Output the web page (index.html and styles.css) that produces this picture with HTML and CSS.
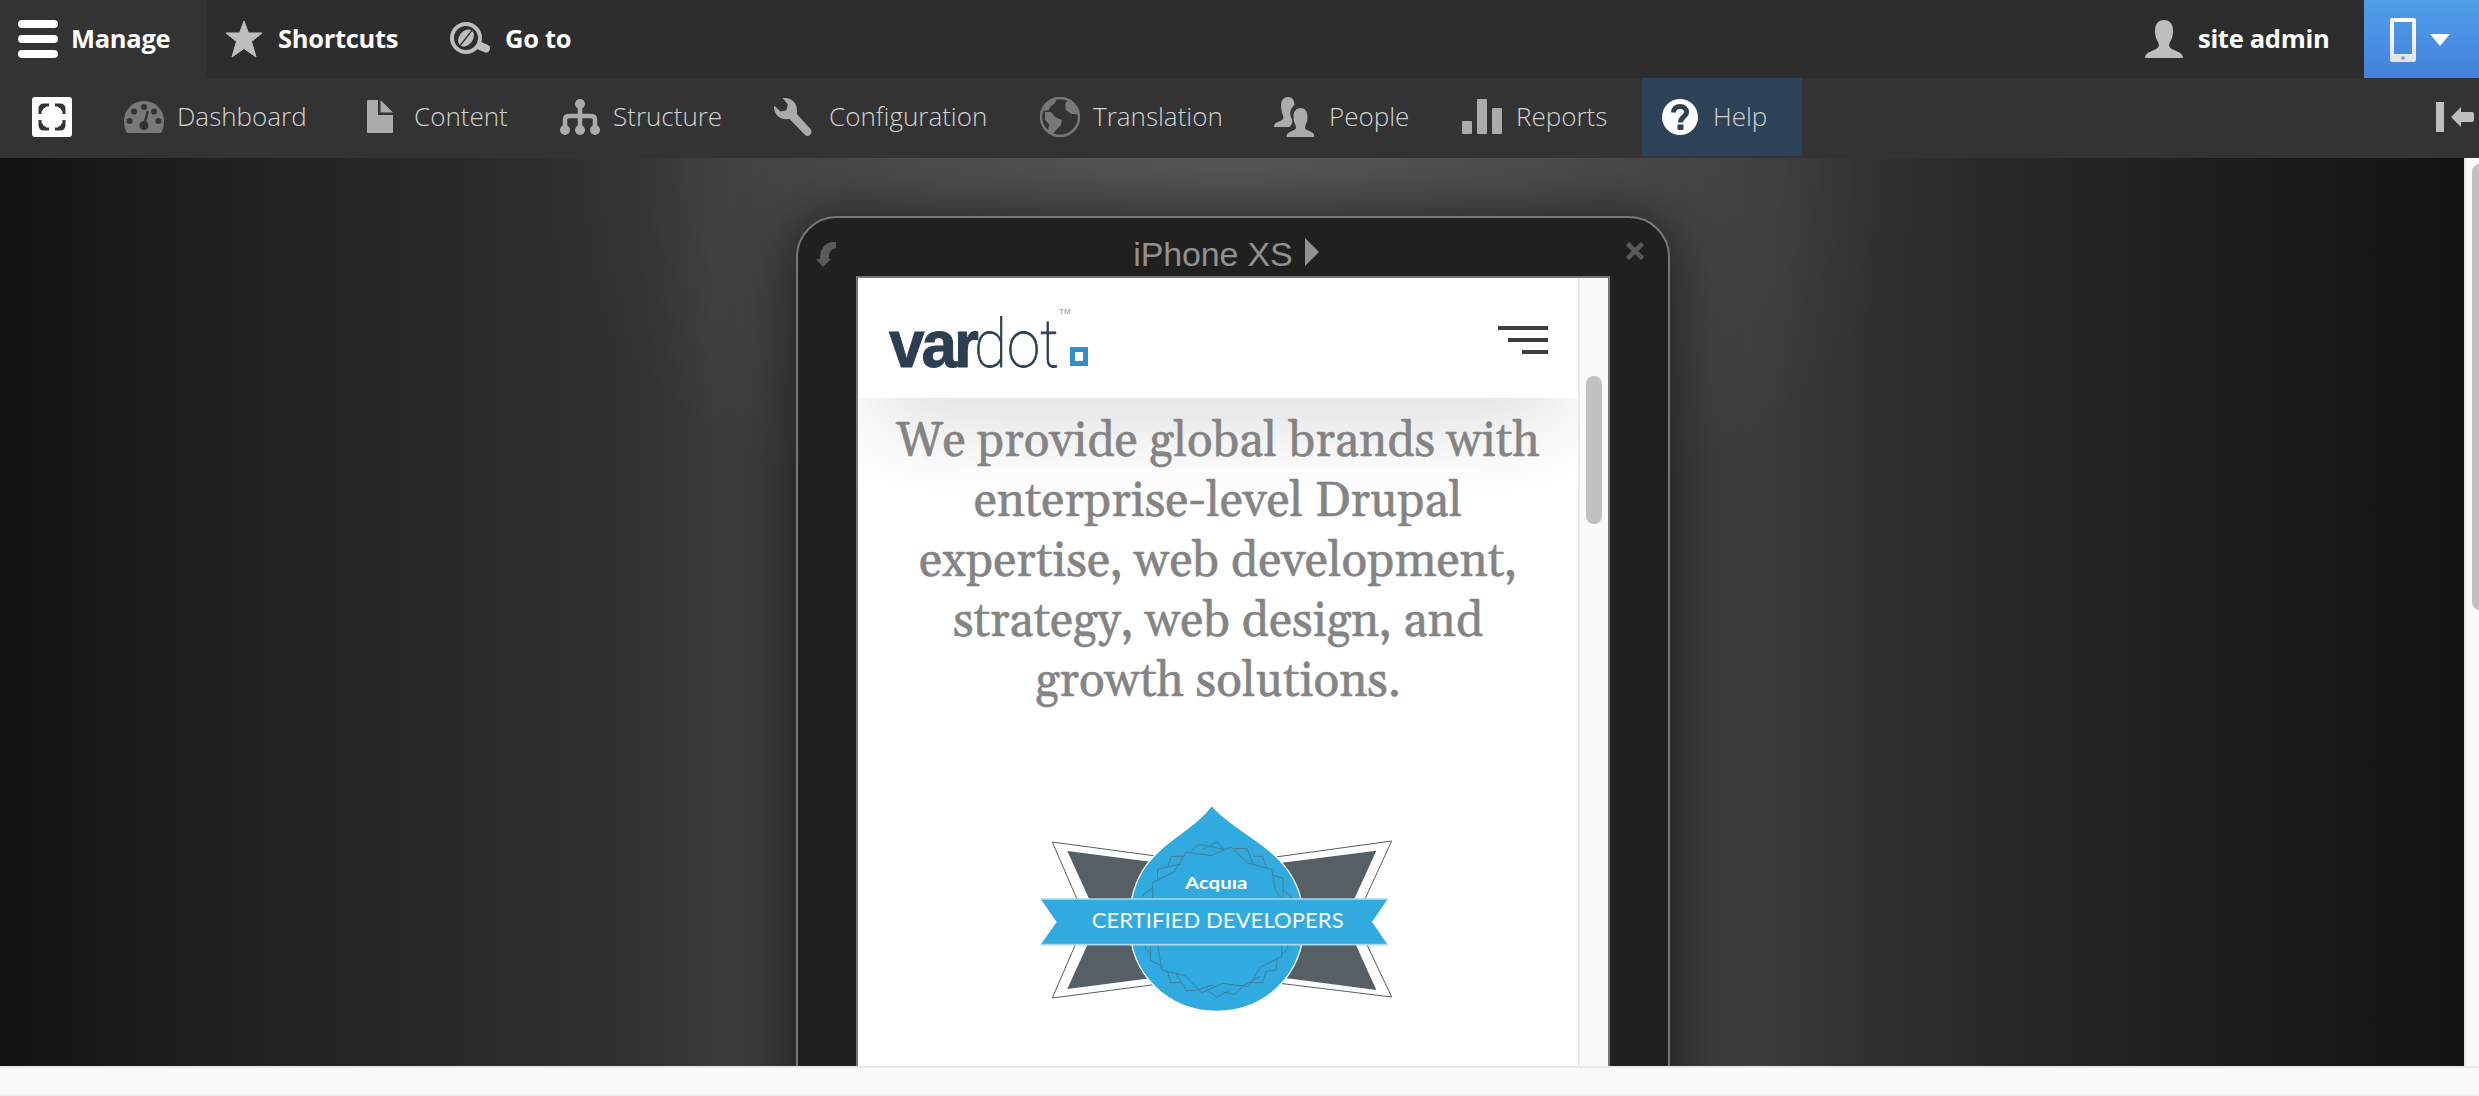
FILE: index.html
```
<!DOCTYPE html>
<html lang="en">
<head>
<meta charset="utf-8">
<title>Device preview</title>
<link rel="stylesheet" href="styles.css">
</head>
<body>
<header class="bar">
  <a class="tab tab-manage"><svg width="40" height="38" viewBox="0 0 40 38"><g fill="#fff"><rect width="40" height="8" rx="4"/><rect y="15" width="40" height="8" rx="4"/><rect y="30" width="40" height="8" rx="4"/></g></svg><span>Manage</span></a>
  <a class="tab tab-shortcuts"><svg width="38" height="38" viewBox="0 0 38 38"><path fill="#bebebe" stroke="#bebebe" stroke-linejoin="round" d="M19 1l4.400 12H37L26.500 21.500l4.500 15.500L19 28.500 7 37l4.500-15.500L1 13h13.600z"/></svg><span>Shortcuts</span></a>
  <a class="tab tab-goto"><svg width="40" height="34" viewBox="0 0 40 34"><circle cx="16" cy="16" r="14" fill="none" stroke="#bebebe" stroke-width="4"/><path d="M30 24l6 2.500" stroke="#bebebe" stroke-width="8" stroke-linecap="round"/><g transform="rotate(38 16 16)"><ellipse cx="16" cy="16" rx="6.800" ry="9.500" fill="#bebebe"/><path d="M16 6v20" stroke="#2d2d2d" stroke-width="1.500"/></g></svg><span>Go to</span></a>
  <a class="tab tab-user"><svg width="38" height="38" viewBox="0 0 38 38"><path fill="#bebebe" d="M0 38c0-5 6-6.500 11-9 3-1.500 3.500-4 2-7-2-3-3-7-3-11C10 4 13 0 19 0s9 4 9 11c0 4-1 8-3 11-1.500 3-1 5.500 2 7 5 2.500 11 4 11 9z"/></svg><span>site admin</span></a>
  <a class="devices"><svg width="60" height="44" viewBox="0 0 60 44"><defs><linearGradient id="phone" x2="0" y2="1"><stop stop-color="#fff"/><stop offset="1" stop-color="#e3e3e6"/></linearGradient></defs><path fill="url(#phone)" fill-rule="evenodd" d="M2 0h22q2 0 2 2v40q0 2-2 2H2q-2 0-2-2V2q0-2 2-2zM4 4v32h18V4z"/><ellipse cx="13" cy="40" rx="1.800" ry="2" fill="#6fa0e0"/><path fill="#fff" d="M40 16h20L50 28z"/></svg></a>
</header>
<nav class="tray">
  <a class="item i-home"><svg width="40" height="40" viewBox="0 0 40 40"><rect width="40" height="40" rx="3" fill="#fff"/><path fill="none" stroke="#333" stroke-width="3" d="M8 17v-5q0-4 4-4h5M23 8h5q4 0 4 4v5M32 23v5q0 4-4 4h-5M17 32h-5q-4 0-4-4v-5"/><path fill="#333" d="M8 8h7l-2 3h-1l-1 1v1l-3 2zM32 8v7l-3-2v-1l-1-1h-1l-2-3zM32 32h-7l2-3h1l1-1v-1l3-2zM8 32v-7l3 2v1l1 1h1l2 3z"/></svg></a>
  <a class="item i-dash"><svg width="40" height="32" viewBox="0 0 40 32"><path fill="#787878" d="M3 32q-3-5-3-12a20 20 0 0 1 40 0q0 7-3 12z"/><g fill="#333"><circle cx="20" cy="6" r="3"/><circle cx="10" cy="10.500" r="3"/><circle cx="30" cy="10.500" r="3"/><circle cx="5.500" cy="20" r="3"/><circle cx="34.500" cy="20" r="3"/><circle cx="20" cy="24.500" r="4.500"/></g><path stroke="#333" stroke-width="2.500" stroke-linecap="round" d="M20.500 23l3-12"/></svg><span>Dashboard</span></a>
  <a class="item i-content"><svg width="26" height="33" viewBox="0 0 26 33"><path fill="#ababab" d="M1 0h10v15h15v17q0 1-1 1H1q-1 0-1-1V1q0-1 1-1zM13.500 0L26 12.500H13.500z"/></svg><span>Content</span></a>
  <a class="item i-structure"><svg width="40" height="36" viewBox="0 0 40 36"><path fill="none" stroke="#ababab" stroke-width="4.500" d="M20 5v25M5 29v-8q0-4 4-4h22q4 0 4 4v8"/><g fill="#ababab"><circle cx="20" cy="5" r="5"/><circle cx="5" cy="31" r="5"/><circle cx="20" cy="31" r="5"/><circle cx="35" cy="31" r="5"/></g></svg><span>Structure</span></a>
  <a class="item i-config"><svg width="38" height="38" viewBox="0 0 38 38"><path fill="#ababab" d="M8.500 0C17-1 23.500 5 23 13c0 2-.5 2.500.5 3.800L36.500 31c3 3.500-1 8.500-5 6.500L16 21.500c-1-.8-2-.5-4-.3C5 21.500-.5 15.500 0 7.500l6.500 6 6-1.300 1.300-6z"/></svg><span>Configuration</span></a>
  <a class="item i-translate"><svg width="40" height="40" viewBox="0 0 40 40"><circle cx="20" cy="20" r="19" fill="none" stroke="#787878" stroke-width="2.500"/><path fill="#787878" d="M7 6L17 1l-2 5-5 4-1 3-6 1zM28 3l-3 4 1 6 5 4h4l3 1C37 11 33 6 28 3zM5 15h6l4 5 7 3-1 5-5 5-4 5-4-3 1-8-4-4z"/></svg><span>Translation</span></a>
  <a class="item i-people"><svg width="40" height="40" viewBox="0 0 40 40"><path fill="#ababab" d="M0 30c0-5 5-5 8-7 2-1 1.500-4 .5-6C7.500 14 7 12 7 8.500 7 3.500 9.500 0 14 0s6.500 3.500 6.500 8C16 12 15 17 18 22q1.500 4-2.500 8z"/><path fill="#ababab" d="M12.500 40c0-5 5-5.500 8.500-7.500 1.500-1 1-3.500 0-5.500s-1.500-4-1.500-7.500c0-5 2.500-8.500 7-8.500s7 3.500 7 8.500c0 3.500-.5 5.500-1.500 7.500s-1.500 4.500 0 5.500c3.500 2 8.500 2.500 8.500 7.500z"/></svg><span>People</span></a>
  <a class="item i-reports"><svg width="40" height="35" viewBox="0 0 40 35"><g fill="#ababab"><rect y="22" width="10" height="13" rx="1"/><rect x="15" width="10" height="35" rx="1"/><rect x="30" y="9" width="10" height="26" rx="1"/></g></svg><span>Reports</span></a>
  <a class="item i-help"><svg width="36" height="36" viewBox="0 0 36 36"><circle cx="18" cy="18" r="18" fill="#fff"/><path fill="none" stroke="#2d4257" stroke-width="5" d="M11.500 13.500c0-4 3-6 6.500-6s6.500 2 6.500 5.500c0 5-6 4.500-6 10.500"/><rect x="15.500" y="25.500" width="6" height="5.500" rx="1" fill="#2d4257"/></svg><span>Help</span></a>
  <a class="item i-orient"><svg width="38" height="30" viewBox="0 0 38 30"><path fill="#bebebe" d="M0 0h8v30H0zM15 15L25 5v5h11q2 0 2 2v6q0 2-2 2H25v5z"/></svg></a>
</nav>
<main class="workspace">
  <section class="stage">
    <div class="device">
      <div class="device-head">
        <svg class="rotate" width="22" height="25" viewBox="0 0 22 25"><path fill="#5a5a5a" d="M20 0v6q-8 2-7 11h2l-8 8-7-8h4Q4 2 16 0z"/></svg>
        <span class="device-name">iPhone XS<i class="play"></i></span>
        <svg class="close" width="18" height="18" viewBox="0 0 18 18"><path stroke="#5a5a5a" stroke-width="4.500" d="M1.500 1.500l15 15m0-15l-15 15"/></svg>
      </div>
      <div class="screen">
        <div class="page">
          <div class="site-head">
            <svg width="210" height="80" viewBox="0 0 210 80">
              <text class="logo-bold" x="1" y="65" textLength="87" lengthAdjust="spacingAndGlyphs">var</text>
              <text class="logo-thin" x="86" y="65" textLength="85" lengthAdjust="spacingAndGlyphs">dot</text>
              <text class="logo-tm" x="171" y="12">TM</text>
              <rect x="184.500" y="47.500" width="13" height="14" fill="none" stroke="#318fcd" stroke-width="5"/>
            </svg>
            <div class="menu"><i></i><i></i><i></i></div>
          </div>
          <div class="site-body">
            <p class="lead">We provide global brands with<br>enterprise-level Drupal<br>expertise, web development,<br>strategy, web design, and<br>growth solutions.</p>
            <svg class="badge" width="400" height="240" viewBox="0 0 1200 720">
              <g fill="#fff" stroke="#565e66" stroke-width="3"><path d="M97 156L600 224V558L97 624L198 390z"/><path d="M1115 153L600 224V558L1115 621L1006 390z"/></g>
              <path fill="#565e66" d="M142 183L600 242V538L142 597L236 390zM1069 182L600 242V538L1069 600L974 390z"/>
              <path fill="#31aadf" stroke="#fff" stroke-width="4" d="M575 46C660 148 848 180 852 397C852 560 730 664 590 664C450 664 328 560 328 397C330 170 500 152 575 46z"/>
              <g fill="none" stroke="#477f9b" stroke-width="3"><path d="M398 330V278L462 246L498 187L573 197L632 171L683 219L755 238L766 300L784 326M370 320V314L398 293M413 268V238L482 222M443 232L454 199H490M510 187L536 163L612 178L591 156L548 178M640 176L681 175L700 222M700 199H728L740 234M755 255L789 265V325M789 300L812 317V326"/><path d="M413 464L425 540L495 557L546 608L608 580L685 590L721 532L785 500V464M391 464V511L425 528M376 464V478L391 489M443 545L452 578H482M468 552L500 603L532 600L580 585M560 600L591 622L628 602M608 605L645 613L668 588L720 560M691 578H728L738 545M735 545L768 540L772 505M785 492L803 478V464"/></g>
              <path fill="#31aadf" d="M62 327H1103L1056 396L1103 464H62L110 396z"/>
              <path stroke="#a9dcf3" stroke-width="5" d="M62 327H1103M62 464H1103"/>
              <text class="badge-brand" x="495" y="297" textLength="187" lengthAdjust="spacingAndGlyphs">Acquıa</text>
              <text class="badge-text" x="215" y="415" textLength="756">CERTIFIED DEVELOPERS</text>
            </svg>
          </div>
        </div>
        <div class="track"><i class="thumb"></i></div>
      </div>
    </div>
  </section>
  <div class="page-track"><i class="page-thumb"></i></div>
</main>
<footer class="bottom-track"></footer>
</body>
</html>
```
FILE: styles.css
```
* { box-sizing: border-box; }
body { margin: 0; width: 2479px; height: 1096px; overflow: hidden; background: #fafafa; font-family: "Open Sans", sans-serif; font-size: 26px; }
svg { display: block; flex: none; }

.bar { display: flex; height: 78px; background: #2d2d2d; color: #fff; font-weight: 700; font-size: 25.5px; letter-spacing: -.3px; }
.bar span, .tray span { padding: 0 0 2px 1px; }
.tab { display: flex; align-items: center; padding-bottom: 1px; white-space: nowrap; }
.tab-manage { width: 206px; padding-left: 18px; gap: 12px; background: #333; }
.tab-shortcuts { width: 242px; padding-left: 19px; gap: 14px; }
.tab-goto { padding-left: 2px; gap: 14px; }
.tab-user { margin-left: auto; width: 219px; gap: 14px; }
.devices { width: 115px; padding: 18px 0 0 26px; background: linear-gradient(#4f9fea, #4481dc); }

.tray { display: flex; height: 80px; background: #333; color: #d2d2d2; font-weight: 320; }
.item { display: flex; align-items: center; height: 78px; padding-bottom: 1px; white-space: nowrap; }
.i-home { width: 124px; padding-left: 32px; }
.i-dash { width: 243px; gap: 12px; }
.i-content { width: 193px; gap: 20px; }
.i-structure { width: 214px; gap: 12px; }
.i-config { width: 266px; gap: 16px; }
.i-translate { width: 234px; gap: 12px; }
.i-people { width: 188px; gap: 14px; }
.i-reports { width: 180px; gap: 13px; }
.i-help { width: 160px; padding-left: 20px; gap: 14px; background: #2d4257; }
.i-orient { margin-left: auto; width: 43px; }

.workspace { display: flex; height: 908px; }
.stage {
  width: 2464px; padding-top: 58px; overflow: hidden;
  background:
    radial-gradient(ellipse 700px 420px at 50% 0, rgba(255,255,255,.11), rgba(255,255,255,0)),
    linear-gradient(90deg, #121212, #1f1f1f 8%, #2a2a2a 19%, #323232 26%, #3b3b3b 29%, #424242 38%, #424242 62%, #3b3b3b 72%, #303030 76%, #262626 83%, #1b1b1b 92%, #131313);
}
.device { width: 874px; height: 1200px; margin-left: 796px; padding: 0 58px; border: 2px solid #777; border-radius: 41px; background: #202020; box-shadow: 0 0 60px rgba(0,0,0,.6); }
.device-head { display: flex; justify-content: space-between; align-items: flex-start; height: 58px; margin: 0 -34px 0 -40px; padding-top: 24px; color: #919191; }
.device-name { margin: -6px 12px 0 0; font: 34px/36px "Liberation Sans", Arial, sans-serif; letter-spacing: -.15px; display: flex; align-items: center; gap: 12px; }
.play { border: 14px solid transparent; border-left-color: #919191; border-right: 0; margin-top: -4px; }
.screen { display: flex; width: 754px; height: 1100px; border: 2px solid #777; background: #fff; }
.page { width: 720px; }
.site-head { position: relative; display: flex; justify-content: space-between; height: 120px; padding: 24px 30px 0 30px; background: #fff; box-shadow: 0 30px 100px -20px rgba(0,0,0,.2); clip-path: inset(0 0 -200px 0); }
.logo-bold { font: 700 66px "Liberation Sans", Arial, sans-serif; fill: #2b3f53; stroke: #2b3f53; stroke-width: 1px; letter-spacing: -3px; }
.logo-thin { font: 100 67px Roboto, sans-serif; fill: #2b3f53; stroke: #2b3f53; stroke-width: .8px; }
.logo-tm { font: 8px "Liberation Sans", Arial, sans-serif; fill: #8a8a8a; }
.menu { display: flex; flex-direction: column; align-items: flex-end; gap: 8px; padding-top: 24px; }
.menu i { width: 50px; height: 4px; background: #3c3c3c; }
.menu i:nth-child(2) { width: 40px; }
.menu i:nth-child(3) { width: 26px; }
.site-body { position: relative; padding-top: 14px; }
.lead { margin: 0; font: 47.7px/60px Gelasio, Georgia, "DejaVu Serif Condensed", serif; color: #848484; -webkit-text-stroke: .5px #848484; text-align: center; white-space: nowrap; }
.badge { margin: 78px 0 0 162px; }
.badge-brand { font: 700 52px Lato, sans-serif; fill: #fff; }
.badge-text { font: 400 66px Lato, sans-serif; fill: #fff; }
.track { width: 30px; padding: 98px 0 0 6px; border-left: 2px solid #e8e8e8; background: #fafafa; }
.thumb { display: block; width: 16px; height: 148px; border-radius: 8px; background: #c1c1c1; }
.page-track { width: 15px; padding: 6px 0 0 6px; border-left: 2px solid #e8e8e8; background: #fafafa; overflow: hidden; }
.page-thumb { display: block; width: 16px; height: 446px; border-radius: 8px; background: #c1c1c1; }
.bottom-track { height: 30px; border-top: 2px solid #e8e8e8; border-bottom: 2px solid #ededed; background: #fafafa; }
```
